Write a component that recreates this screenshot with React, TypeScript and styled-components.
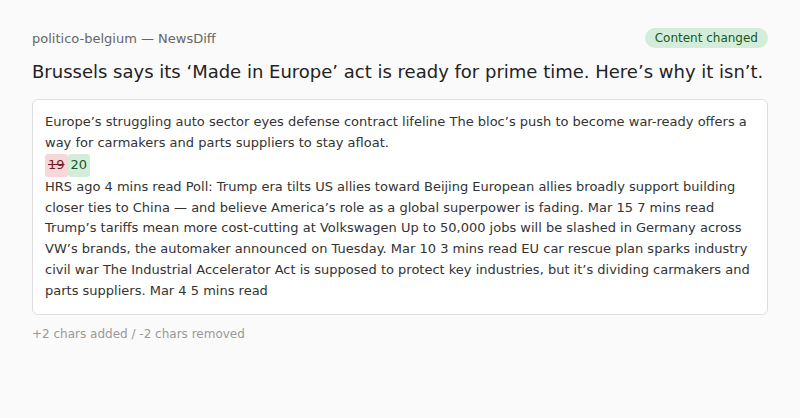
import React from "react";
import styled, { createGlobalStyle } from "styled-components";

const Global = createGlobalStyle`
  html, body { margin: 0; padding: 0; background: #fafafa; }
  body { font-family: "DejaVu Sans", Verdana, sans-serif; color: #222; }
`;

const Page = styled.div`
  padding: 28px 32px 24px;
  display: flex;
  flex-direction: column;
`;

const Header = styled.div`
  display: flex;
  align-items: center;
  justify-content: space-between;
`;

const Source = styled.div`
  font-size: 13px;
  color: #666;
`;

const Badge = styled.span`
  font-size: 12px;
  line-height: 16px;
  padding: 2px 10px;
  border-radius: 10px;
  background: #d4edda;
  color: #155724;
`;

const Title = styled.h1`
  font-size: 18px;
  font-weight: normal;
  margin: 12px 0 16px;
  line-height: 1.3;
  color: #222;
`;

const Card = styled.div`
  background: #fff;
  border: 1px solid #ddd;
  border-radius: 6px;
  padding: 12px;
  font-size: 13px;
  line-height: 1.6;
  color: #333;
  white-space: pre-wrap;
`;

const Diff = styled.span<{ $kind: "del" | "ins" }>`
  display: inline-block;
  padding: 1px 3px;
  border-radius: 3px;
  background: ${(p) => (p.$kind === "del" ? "#f8d7da" : "#d4edda")};
  color: ${(p) => (p.$kind === "del" ? "#721c24" : "#155724")};
  text-decoration: ${(p) => (p.$kind === "del" ? "line-through" : "none")};
`;

const Footer = styled.div`
  margin-top: 12px;
  font-size: 12px;
  color: #999;
`;

export default function App() {
  return (
    <>
      <Global />
      <Page>
        <Header>
          <Source>politico-belgium — NewsDiff</Source>
          <Badge>Content changed</Badge>
        </Header>
        <Title>Brussels says its ‘Made in Europe’ act is ready for prime time. Here’s why it isn’t.</Title>
        <Card>
          {"Europe’s struggling auto sector eyes defense contract lifeline The bloc’s push to become war-ready offers a way for carmakers and parts suppliers to stay afloat.\n"}
          <Diff $kind="del">19</Diff>
          <Diff $kind="ins">20</Diff>
          {"\nHRS ago 4 mins read Poll: Trump era tilts US allies toward Beijing European allies broadly support building closer ties to China — and believe America’s role as a global superpower is fading. Mar 15 7 mins read Trump’s tariffs mean more cost-cutting at Volkswagen Up to 50,000 jobs will be slashed in Germany across VW’s brands, the automaker announced on Tuesday. Mar 10 3 mins read EU car rescue plan sparks industry civil war The Industrial Accelerator Act is supposed to protect key industries, but it’s dividing carmakers and parts suppliers. Mar 4 5 mins read"}
        </Card>
        <Footer>+2 chars added / -2 chars removed</Footer>
      </Page>
    </>
  );
}
